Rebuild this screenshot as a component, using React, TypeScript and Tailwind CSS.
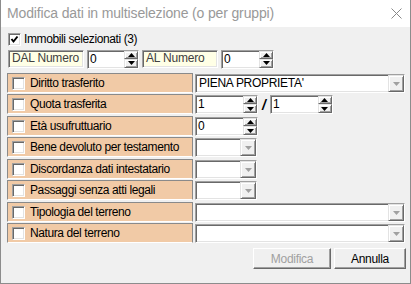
import React from "react";

const sunken =
  "border border-t-[#a0a0a0] border-l-[#a0a0a0] border-r-white border-b-white shadow-[inset_1px_1px_0_#696969,inset_-1px_-1px_0_#e3e3e3]";
const raised =
  "bg-[#f0f0f0] border border-t-[#e3e3e3] border-l-[#e3e3e3] border-r-[#696969] border-b-[#696969] shadow-[inset_1px_1px_0_#ffffff,inset_-1px_-1px_0_#a0a0a0]";

function Tri({ up, gray }: { up?: boolean; gray?: boolean }) {
  return (
    <svg width="7" height="4" viewBox="0 0 7 4" className="block">
      <polygon
        points={up ? "0,4 3.5,0 7,4" : "0,0 7,0 3.5,4"}
        fill={gray ? "#a0a0a0" : "#000"}
      />
    </svg>
  );
}

function Check({ checked }: { checked?: boolean }) {
  return (
    <div className={`w-[13px] h-[13px] bg-white shrink-0 ${sunken} flex items-center justify-center`}>
      {checked && (
        <svg width="9" height="9" viewBox="0 0 9 9" className="block">
          <polyline points="1.5,4 3.5,6.5 7.5,1.5" fill="none" stroke="#000" strokeWidth="2" />
        </svg>
      )}
    </div>
  );
}

function Spin({ value, className }: { value: string; className: string }) {
  return (
    <div className={`${sunken} bg-white flex h-[19px] ${className}`}>
      <div className="flex-1 pl-[2px] text-[12px] leading-[16px] tracking-[-0.3px] text-black">{value}</div>
      <div className="flex flex-col w-[14px] shrink-0">
        <div className={`${raised} h-[8px] flex items-center justify-center`}>
          <Tri up />
        </div>
        <div className={`${raised} h-[9px] flex items-center justify-center`}>
          <Tri />
        </div>
      </div>
    </div>
  );
}

function Combo({ value, className }: { value?: string; className: string }) {
  return (
    <div className={`${sunken} bg-white flex h-[19px] ${className}`}>
      <div className="flex-1 pl-[3px] text-[12px] leading-[16px] tracking-[-0.3px] text-black overflow-hidden whitespace-nowrap">
        {value}
      </div>
      <div className={`${raised} w-[16px] h-[17px] shrink-0 flex items-center justify-center`}>
        <Tri gray />
      </div>
    </div>
  );
}

function Label({ text }: { text: string }) {
  return (
    <div className="w-[186px] h-[20px] shrink-0 bg-[#f1caa6] border border-t-[#8a8a8a] border-l-[#8a8a8a] border-r-[#8a8a8a] border-b-white flex items-center pl-[4px] gap-[5px]">
      <Check />
      <span className="text-[12px] tracking-[-0.4px] text-black leading-[14px] whitespace-nowrap">{text}</span>
    </div>
  );
}

function Row({ h, label, children }: { h: string; label: string; children?: React.ReactNode }) {
  return (
    <div className={`flex items-start gap-[2px] ${h}`}>
      <Label text={label} />
      <div className="flex items-center gap-[3px] pt-[1px]">{children}</div>
    </div>
  );
}

export default function App() {
  return (
    <div className="w-[411px] h-[284px] bg-[#f0f0f0] border-l border-r border-b border-[#8c8c8c] flex flex-col font-['Liberation_Sans',Arial,sans-serif] overflow-hidden">
      <div className="h-[27px] bg-white flex items-center justify-between pl-[6px] pr-[8px] shrink-0">
        <span className="text-[14px] text-[#999999] tracking-[-0.15px]">Modifica dati in multiselezione (o per gruppi)</span>
        <svg width="11" height="11" viewBox="0 0 11 11" className="block">
          <path d="M0.5 0.5 L10.5 10.5 M10.5 0.5 L0.5 10.5" stroke="#888" strokeWidth="1" />
        </svg>
      </div>
      <div className="flex flex-col pl-[6px]">
        <div className="flex items-center gap-[3px] mt-[5px] h-[14px] pl-[1px]">
          <Check checked />
          <span className="text-[12px] tracking-[-0.4px] text-black leading-[14px]">Immobili selezionati (3)</span>
        </div>
        <div className="flex items-center gap-[3px] mt-[4px] h-[18px] pl-[1px]">
          <div className={`${sunken} bg-[#ffffe6] w-[76px] h-[18px] pl-[3px] text-[12px] tracking-[-0.2px] leading-[15px] text-[#404040]`}>
            DAL Numero
          </div>
          <Spin value="0" className="w-[52px] h-[18px]" />
          <div className={`${sunken} bg-[#ffffe6] w-[76px] h-[18px] pl-[3px] text-[12px] tracking-[-0.2px] leading-[15px] text-[#404040]`}>
            AL Numero
          </div>
          <Spin value="0" className="w-[53px] h-[18px]" />
        </div>
        <div className="flex flex-col mt-[5px]">
          <Row h="h-[21px]" label="Diritto trasferito">
            <Combo value="PIENA PROPRIETA'" className="w-[210px]" />
          </Row>
          <Row h="h-[22px]" label="Quota trasferita">
            <Spin value="1" className="w-[63px]" />
            <span className="text-[14px] font-bold italic text-black leading-[16px] px-[1px]">/</span>
            <Spin value="1" className="w-[63px]" />
          </Row>
          <Row h="h-[21px]" label="Età usufruttuario">
            <Spin value="0" className="w-[63px]" />
          </Row>
          <Row h="h-[22px]" label="Bene devoluto per testamento">
            <Combo className="w-[62px]" />
          </Row>
          <Row h="h-[21px]" label="Discordanza dati intestatario">
            <Combo className="w-[62px]" />
          </Row>
          <Row h="h-[22px]" label="Passaggi senza atti legali">
            <Combo className="w-[62px]" />
          </Row>
          <Row h="h-[21px]" label="Tipologia del terreno">
            <Combo className="w-[210px]" />
          </Row>
          <Row h="h-[22px]" label="Natura del terreno">
            <Combo className="w-[210px]" />
          </Row>
        </div>
        <div className="flex justify-end gap-[3px] mt-[3px] pr-[4px]">
          <div className="w-[78px] h-[21px] bg-[#f0f0f0] border border-t-white border-l-white border-r-[#696969] border-b-[#696969] shadow-[inset_-1px_-1px_0_#a0a0a0] flex items-center justify-center text-[12px] tracking-[-0.3px] text-[#a0a0a0]">
            Modifica
          </div>
          <div className="w-[72px] h-[21px] bg-[#f0f0f0] border border-t-white border-l-white border-r-[#696969] border-b-[#696969] shadow-[inset_-1px_-1px_0_#a0a0a0] flex items-center justify-center text-[12px] tracking-[-0.3px] text-black">
            Annulla
          </div>
        </div>
      </div>
    </div>
  );
}
